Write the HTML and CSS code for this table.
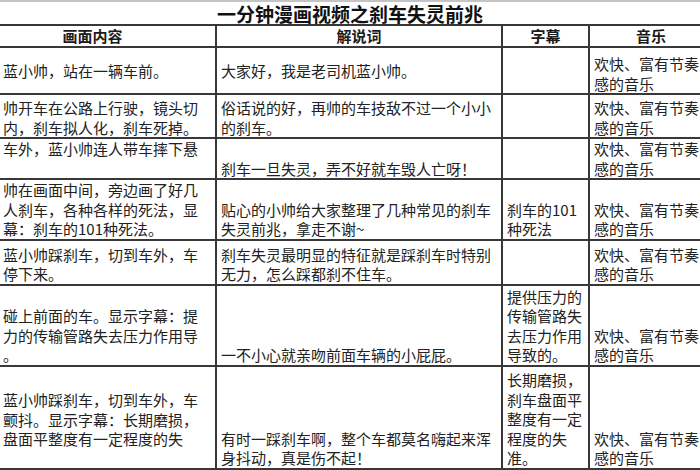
FILE: index.html
```html
<!DOCTYPE html>
<html lang="zh-CN">
<head>
<meta charset="utf-8">
<title>一分钟漫画视频之刹车失灵前兆</title>
<link rel="stylesheet" href="styles.css">
</head>
<body>
<div class="sheet">
<table class="grid">
  <colgroup>
    <col class="c-scene"><col class="c-voice"><col class="c-sub"><col class="c-music">
  </colgroup>
  <tr class="r-title"><td colspan="4" class="title">一分钟漫画视频之刹车失灵前兆</td></tr>
  <tr class="r-head">
    <th class="h-scene">画面内容</th><th>解说词</th><th>字幕</th><th>音乐</th>
  </tr>
  <tr class="r1">
    <td class="scene mid">蓝小帅，站在一辆车前。</td>
    <td class="mid">大家好，我是老司机蓝小帅。</td>
    <td></td>
    <td>欢快、富有节奏感的音乐</td>
  </tr>
  <tr class="r2">
    <td class="scene">帅开车在公路上行驶，镜头切<br>内，刹车拟人化，刹车死掉。</td>
    <td>俗话说的好，再帅的车技敌不过一个小小的刹车。</td>
    <td></td>
    <td>欢快、富有节奏感的音乐</td>
  </tr>
  <tr class="r3">
    <td class="scene top">车外，蓝小帅连人带车摔下悬</td>
    <td>刹车一旦失灵，弄不好就车毁人亡呀！</td>
    <td></td>
    <td>欢快、富有节奏感的音乐</td>
  </tr>
  <tr class="r4">
    <td class="scene">帅在画面中间，旁边画了好几<br>人刹车，各种各样的死法，显<br>幕：刹车的101种死法。</td>
    <td>贴心的小帅给大家整理了几种常见的刹车失灵前兆，拿走不谢~</td>
    <td>刹车的101种死法</td>
    <td>欢快、富有节奏感的音乐</td>
  </tr>
  <tr class="r5">
    <td class="scene">蓝小帅踩刹车，切到车外，车<br>停下来。</td>
    <td>刹车失灵最明显的特征就是踩刹车时特别无力，怎么踩都刹不住车。</td>
    <td></td>
    <td>欢快、富有节奏感的音乐</td>
  </tr>
  <tr class="r6">
    <td class="scene">碰上前面的车。显示字幕：提<br>力的传输管路失去压力作用导<br>。</td>
    <td>一不小心就亲吻前面车辆的小屁屁。</td>
    <td>提供压力的传输管路失去压力作用导致的。</td>
    <td>欢快、富有节奏感的音乐</td>
  </tr>
  <tr class="r7">
    <td class="scene lift">蓝小帅踩刹车，切到车外，车<br>颤抖。显示字幕：长期磨损，<br>盘面平整度有一定程度的失</td>
    <td>有时一踩刹车啊，整个车都莫名嗨起来浑身抖动，真是伤不起！</td>
    <td>长期磨损，刹车盘面平整度有一定程度的失准。</td>
    <td>欢快、富有节奏感的音乐</td>
  </tr>
</table>
</div>
</body>
</html>
```
FILE: styles.css
```css
html, body {
  margin: 0;
  padding: 0;
  overflow: hidden;
  background: #ffffff;
}

.sheet {
  width: 700px;
  height: 470px;
  overflow: hidden;
}

.grid {
  width: 712px;
  table-layout: fixed;
  border-collapse: collapse;
  font-family: "Noto Sans CJK SC", "Noto Sans", sans-serif;
  font-size: 15px;
  line-height: 19.5px;
  color: #222222;
}

.c-scene { width: 216px; }
.c-voice { width: 286px; }
.c-sub { width: 87px; }
.c-music { width: 123px; }

.grid td,
.grid th {
  border: 2px solid #383838;
  padding: 0 4px;
  vertical-align: bottom;
  text-align: left;
}

.grid td:first-child,
.grid th:first-child {
  border-left: none;
}

.grid td:last-child,
.grid th:last-child {
  border-right: none;
}

.r-title { height: 24px; }
.r-head { height: 22px; }
.r1 { height: 47px; }
.r2 { height: 44px; }
.r3 { height: 41px; }
.r4 { height: 60px; }
.r5 { height: 45px; }
.r6 { height: 81px; }
.r7 { height: 103px; }

.grid td.title {
  border-top: 2px solid #c4c4c4;
  border-left: none;
  border-right: none;
  padding: 1px 12px 0 0;
  text-align: center;
  vertical-align: middle;
  font-size: 19px;
  font-weight: 700;
  line-height: 19px;
  color: #111111;
}

.grid th {
  text-align: center;
  vertical-align: middle;
  font-weight: 700;
  padding: 0;
  color: #1a1a1a;
  line-height: 18px;
}

.grid th.h-scene {
  padding-right: 30px;
}

.grid td.scene {
  white-space: nowrap;
  padding-left: 3px;
}

.grid td.mid { vertical-align: middle; }
.grid td.top { vertical-align: top; }
.grid td.lift { padding-bottom: 19px; }
```
